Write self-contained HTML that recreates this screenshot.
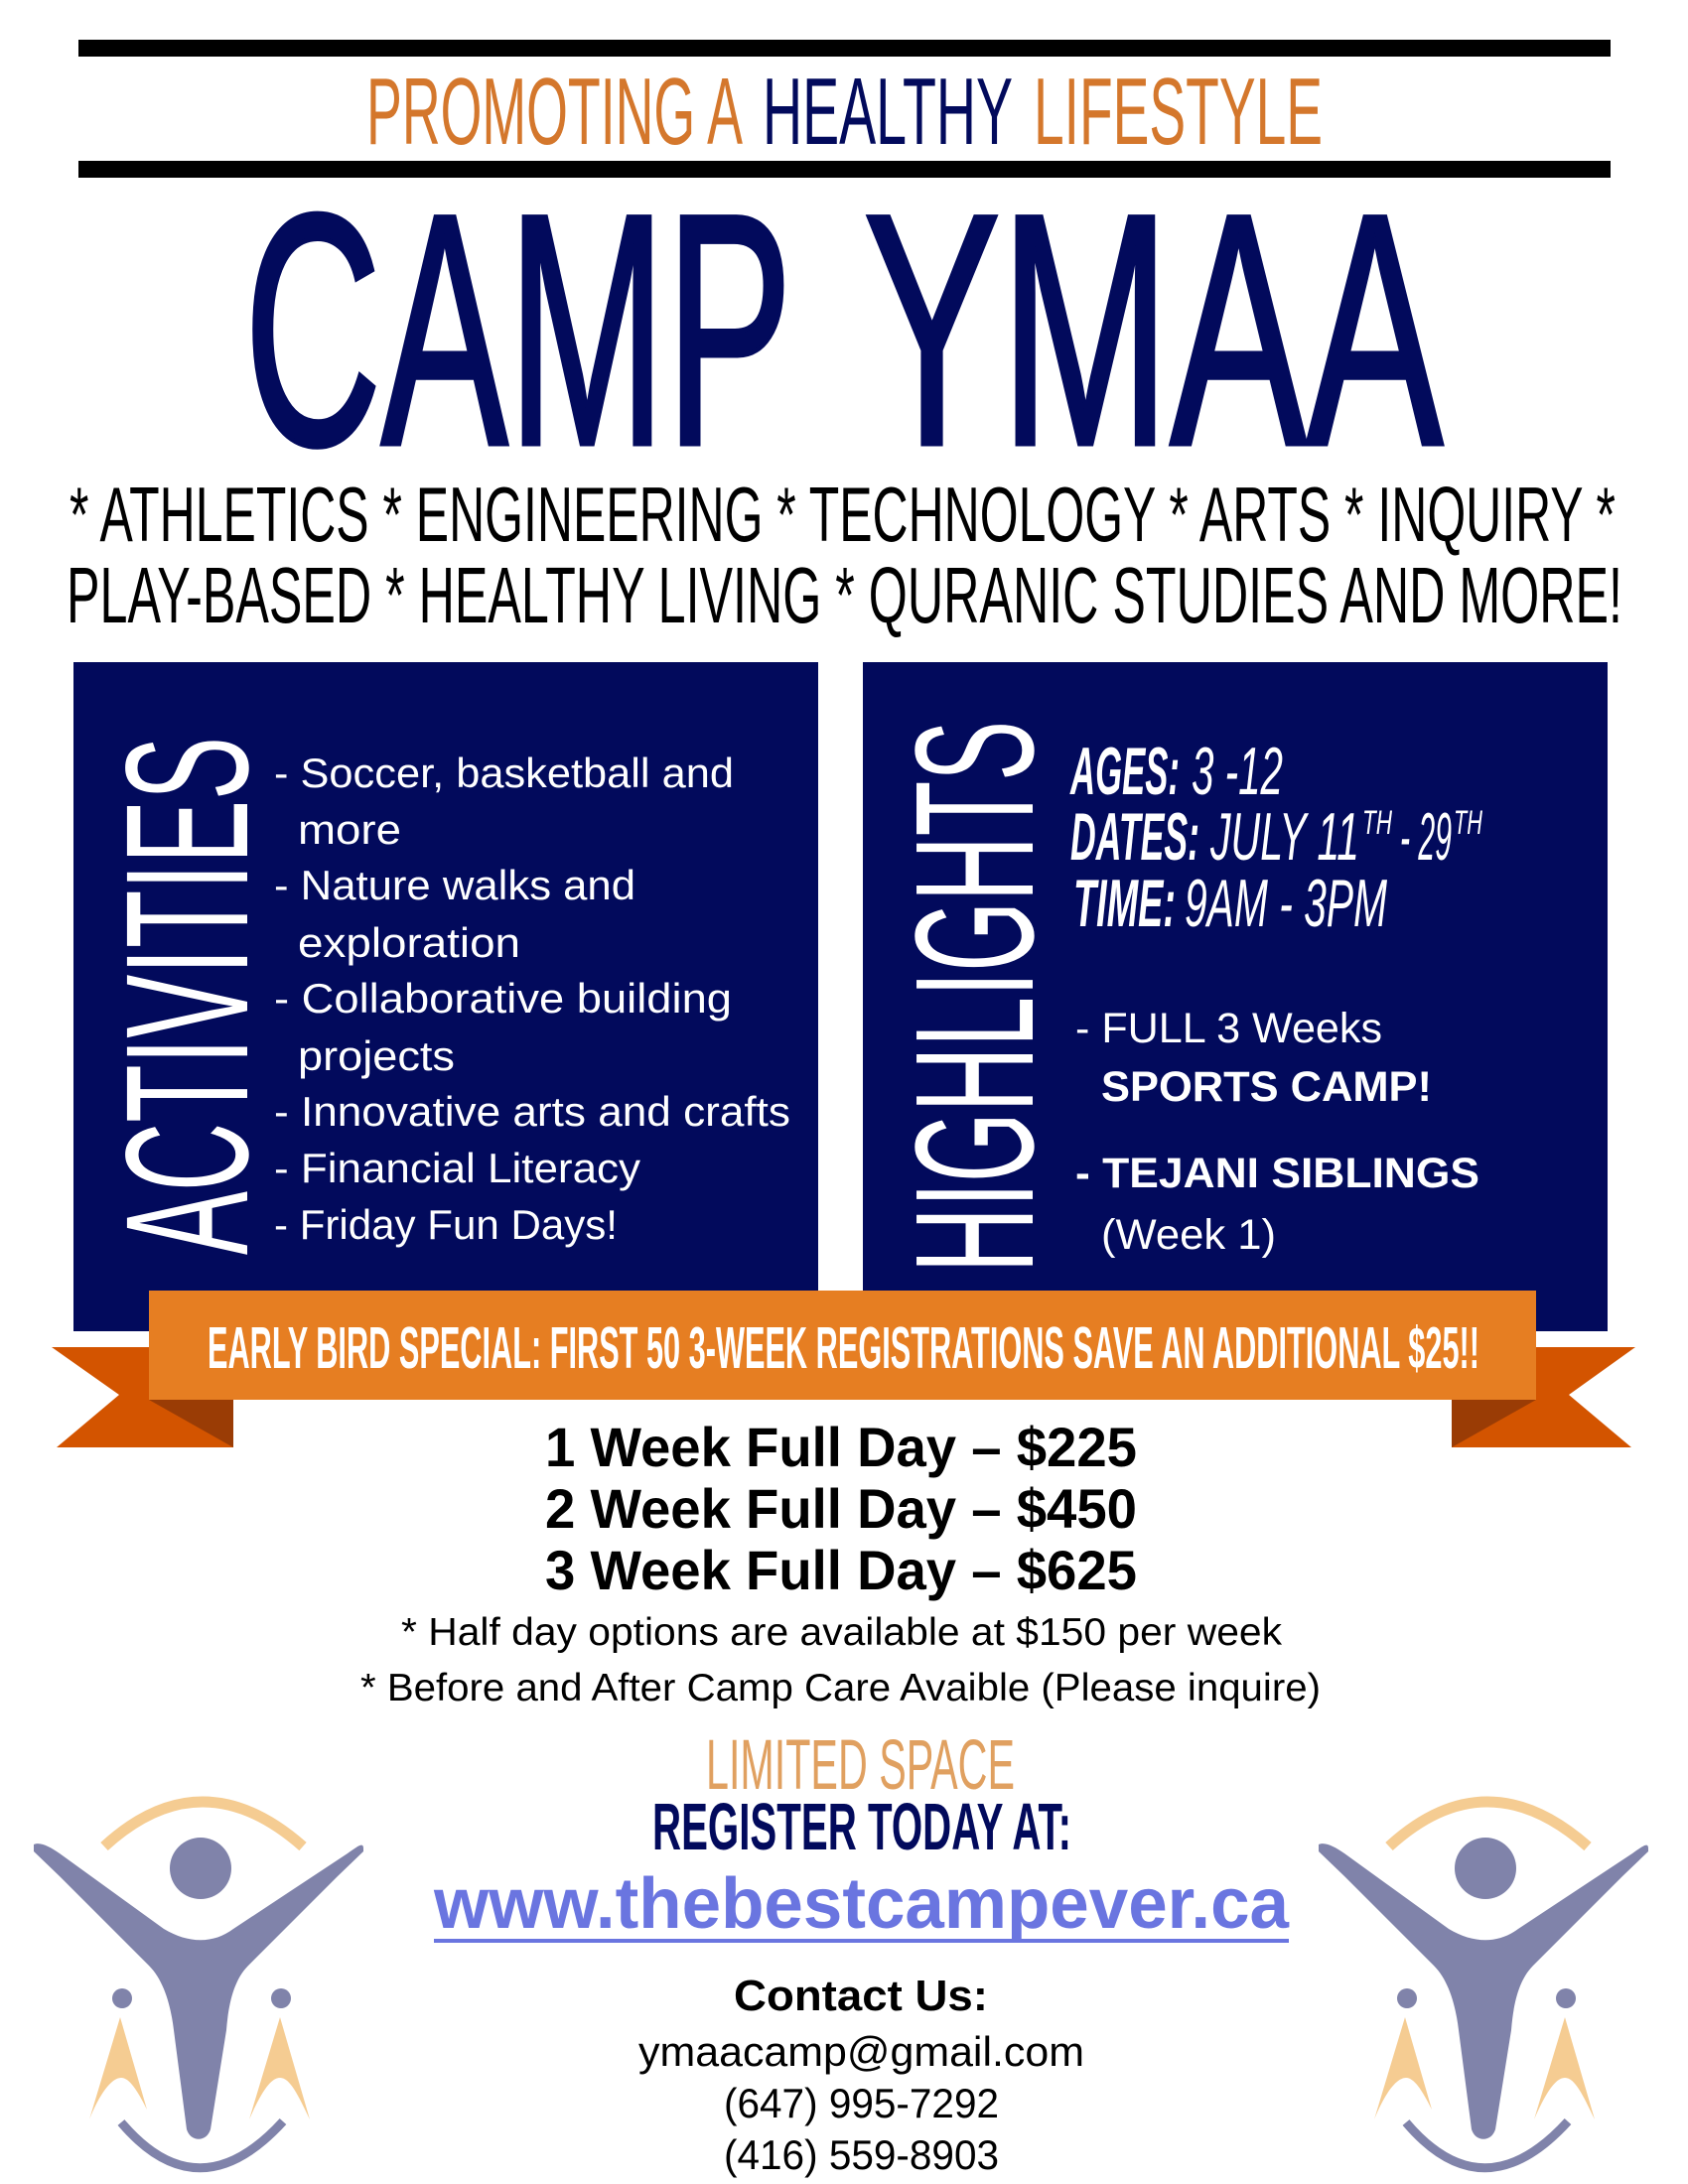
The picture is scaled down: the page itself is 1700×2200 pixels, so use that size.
<!DOCTYPE html>
<html><head><meta charset="utf-8"><style>html,body{margin:0;padding:0;background:#fff}svg{display:block}</style></head>
<body>
<svg width="1700" height="2200" viewBox="0 0 1700 2200" xmlns="http://www.w3.org/2000/svg" font-family="Liberation Sans, sans-serif">
<rect x="79" y="40" width="1543" height="17" fill="#000"/>
<rect x="79" y="162" width="1543" height="17" fill="#000"/>
<text x="369" y="145" textLength="379" lengthAdjust="spacingAndGlyphs" fill="#d4772c" font-size="96">PROMOTING A</text>
<text x="768" y="145" textLength="252" lengthAdjust="spacingAndGlyphs" fill="#020a5c" font-size="96">HEALTHY</text>
<text x="1041" y="145" textLength="291" lengthAdjust="spacingAndGlyphs" fill="#d4772c" font-size="96">LIFESTYLE</text>
<text x="246" y="447" textLength="552" lengthAdjust="spacingAndGlyphs" fill="#020a5c" stroke="#020a5c" stroke-width="5" font-size="332">CAMP</text>
<text x="870" y="447" textLength="583" lengthAdjust="spacingAndGlyphs" fill="#020a5c" stroke="#020a5c" stroke-width="5" font-size="332">YMAA</text>
<text x="70" y="545" textLength="1557" lengthAdjust="spacingAndGlyphs" font-size="78">*  ATHLETICS  *  ENGINEERING  *  TECHNOLOGY  *  ARTS  *  INQUIRY  *</text>
<text x="67" y="627" textLength="1567" lengthAdjust="spacingAndGlyphs" font-size="80">PLAY-BASED  *  HEALTHY LIVING  *  QURANIC STUDIES AND MORE!</text>

<rect x="74" y="667" width="750" height="674" fill="#020a5c"/>
<rect x="869" y="667" width="750" height="674" fill="#020a5c"/>
<text transform="translate(249,1264) rotate(-90)" textLength="522" lengthAdjust="spacingAndGlyphs" fill="#fff" font-size="176">ACTIVITIES</text>
<text transform="translate(1040,1282) rotate(-90)" textLength="556" lengthAdjust="spacingAndGlyphs" fill="#fff" font-size="170">HIGHLIGHTS</text>

<g fill="#fff" font-size="42">
<text x="276" y="793" textLength="463" lengthAdjust="spacingAndGlyphs">- Soccer, basketball and</text>
<text x="300" y="850" textLength="104" lengthAdjust="spacingAndGlyphs">more</text>
<text x="276" y="906" textLength="364" lengthAdjust="spacingAndGlyphs">- Nature walks and</text>
<text x="300" y="964" textLength="224" lengthAdjust="spacingAndGlyphs">exploration</text>
<text x="276" y="1020" textLength="461" lengthAdjust="spacingAndGlyphs">- Collaborative building</text>
<text x="300" y="1078" textLength="158" lengthAdjust="spacingAndGlyphs">projects</text>
<text x="276" y="1134" textLength="520" lengthAdjust="spacingAndGlyphs">- Innovative arts and crafts</text>
<text x="276" y="1191" textLength="369" lengthAdjust="spacingAndGlyphs">- Financial Literacy</text>
<text x="276" y="1248" textLength="346" lengthAdjust="spacingAndGlyphs">- Friday Fun Days!</text>
</g>
<g fill="#fff" font-size="68">
<text x="1078" y="800" textLength="110" lengthAdjust="spacingAndGlyphs" font-weight="bold" font-style="italic">AGES:</text>
<text x="1200" y="800" textLength="92" lengthAdjust="spacingAndGlyphs" font-style="italic">3 -12</text>
<text x="1078" y="866" textLength="130" lengthAdjust="spacingAndGlyphs" font-weight="bold" font-style="italic">DATES:</text>
<text x="1219" y="866" textLength="150" lengthAdjust="spacingAndGlyphs" font-style="italic">JULY 11</text>
<text x="1372" y="840" textLength="30" lengthAdjust="spacingAndGlyphs" font-style="italic" font-size="34">TH</text>
<text x="1410" y="866" textLength="52" lengthAdjust="spacingAndGlyphs" font-style="italic">- 29</text>
<text x="1464" y="840" textLength="29" lengthAdjust="spacingAndGlyphs" font-style="italic" font-size="34">TH</text>
<text x="1081" y="933" textLength="103" lengthAdjust="spacingAndGlyphs" font-weight="bold" font-style="italic">TIME:</text>
<text x="1193" y="933" textLength="204" lengthAdjust="spacingAndGlyphs" font-style="italic">9AM - 3PM</text>
</g>
<g fill="#fff" font-size="43">
<text x="1083" y="1050" textLength="309" lengthAdjust="spacingAndGlyphs">- FULL 3 Weeks</text>
<text x="1109" y="1109" textLength="333" lengthAdjust="spacingAndGlyphs" font-weight="bold">SPORTS CAMP!</text>
<text x="1083" y="1196" textLength="407" lengthAdjust="spacingAndGlyphs" font-weight="bold">- TEJANI SIBLINGS</text>
<text x="1109" y="1258" textLength="176" lengthAdjust="spacingAndGlyphs">(Week 1)</text>
</g>

<polygon points="52,1357 235,1357 235,1458 57,1458 120,1405" fill="#d35400"/>
<polygon points="150,1410 235,1410 235,1458" fill="#9a3c05"/>
<polygon points="1647,1357 1462,1357 1462,1458 1643,1458 1580,1405" fill="#d35400"/>
<polygon points="1547,1410 1462,1410 1462,1458" fill="#9a3c05"/>
<rect x="150" y="1300" width="1397" height="110" fill="#e67e22"/>
<text x="209" y="1378" textLength="1281" lengthAdjust="spacingAndGlyphs" fill="#fff" font-size="59" font-weight="bold">EARLY BIRD SPECIAL: FIRST 50 3-WEEK REGISTRATIONS SAVE AN ADDITIONAL $25!!</text>

<g font-size="56" font-weight="bold" fill="#000">
<text x="549" y="1477" textLength="596" lengthAdjust="spacingAndGlyphs">1 Week Full Day – $225</text>
<text x="549" y="1539" textLength="596" lengthAdjust="spacingAndGlyphs">2 Week Full Day – $450</text>
<text x="549" y="1601" textLength="596" lengthAdjust="spacingAndGlyphs">3 Week Full Day – $625</text>
</g>
<text x="404" y="1657" textLength="887" lengthAdjust="spacingAndGlyphs" font-size="39">* Half day options are available at $150 per week</text>
<text x="363" y="1713" textLength="967" lengthAdjust="spacingAndGlyphs" font-size="39">* Before and After Camp Care Avaible (Please inquire)</text>
<text x="711" y="1802" textLength="311" lengthAdjust="spacingAndGlyphs" font-size="71" fill="#e0a060">LIMITED SPACE</text>
<text x="657" y="1863" textLength="422" lengthAdjust="spacingAndGlyphs" font-size="67" font-weight="bold" fill="#020a5c">REGISTER TODAY AT:</text>
<text x="437" y="1942" textLength="861" lengthAdjust="spacingAndGlyphs" font-size="72" font-weight="bold" fill="#6a75e0">www.thebestcampever.ca</text>
<rect x="437" y="1953" width="861" height="4" fill="#6a75e0"/>
<text x="739" y="2025" textLength="256" lengthAdjust="spacingAndGlyphs" font-size="44" font-weight="bold">Contact Us:</text>
<text x="643" y="2081" textLength="449" lengthAdjust="spacingAndGlyphs" font-size="42">ymaacamp@gmail.com</text>
<text x="729" y="2133" textLength="277" lengthAdjust="spacingAndGlyphs" font-size="42">(647) 995-7292</text>
<text x="729" y="2185" textLength="277" lengthAdjust="spacingAndGlyphs" font-size="42">(416) 559-8903</text>

<defs>
<g id="logo">
<path d="M105,160 Q203,70 305,160" fill="none" stroke="#f5cc92" stroke-width="11"/>
<circle cx="202" cy="182" r="31" fill="#8083aa"/>
<path d="M34,158 C40,155 50,160 60,167 L165,243 C190,258 215,258 235,243 L350,167 C360,160 366,155 366,162 L366,165 L340,190 L250,280 C235,295 230,320 228,345 L212,445 C208,458 192,458 188,445 L175,345 C172,320 165,295 150,280 L60,190 L34,165 Z" fill="#8083aa"/>
<circle cx="123" cy="313" r="10" fill="#8083aa"/>
<circle cx="283" cy="313" r="10" fill="#8083aa"/>
<path d="M121,332 L148,425 C138,405 130,393 122,393 C112,393 100,410 90,435 Z" fill="#f5cc92"/>
<path d="M282,332 L312,435 C300,410 292,393 282,393 C272,393 262,410 251,435 Z" fill="#f5cc92"/>
<path d="M122,438 Q200,530 285,437" fill="none" stroke="#8083aa" stroke-width="9"/>
</g>
</defs>
<use href="#logo" x="0" y="1700"/>
<use href="#logo" x="1294" y="1700"/>
</svg>
</body></html>
